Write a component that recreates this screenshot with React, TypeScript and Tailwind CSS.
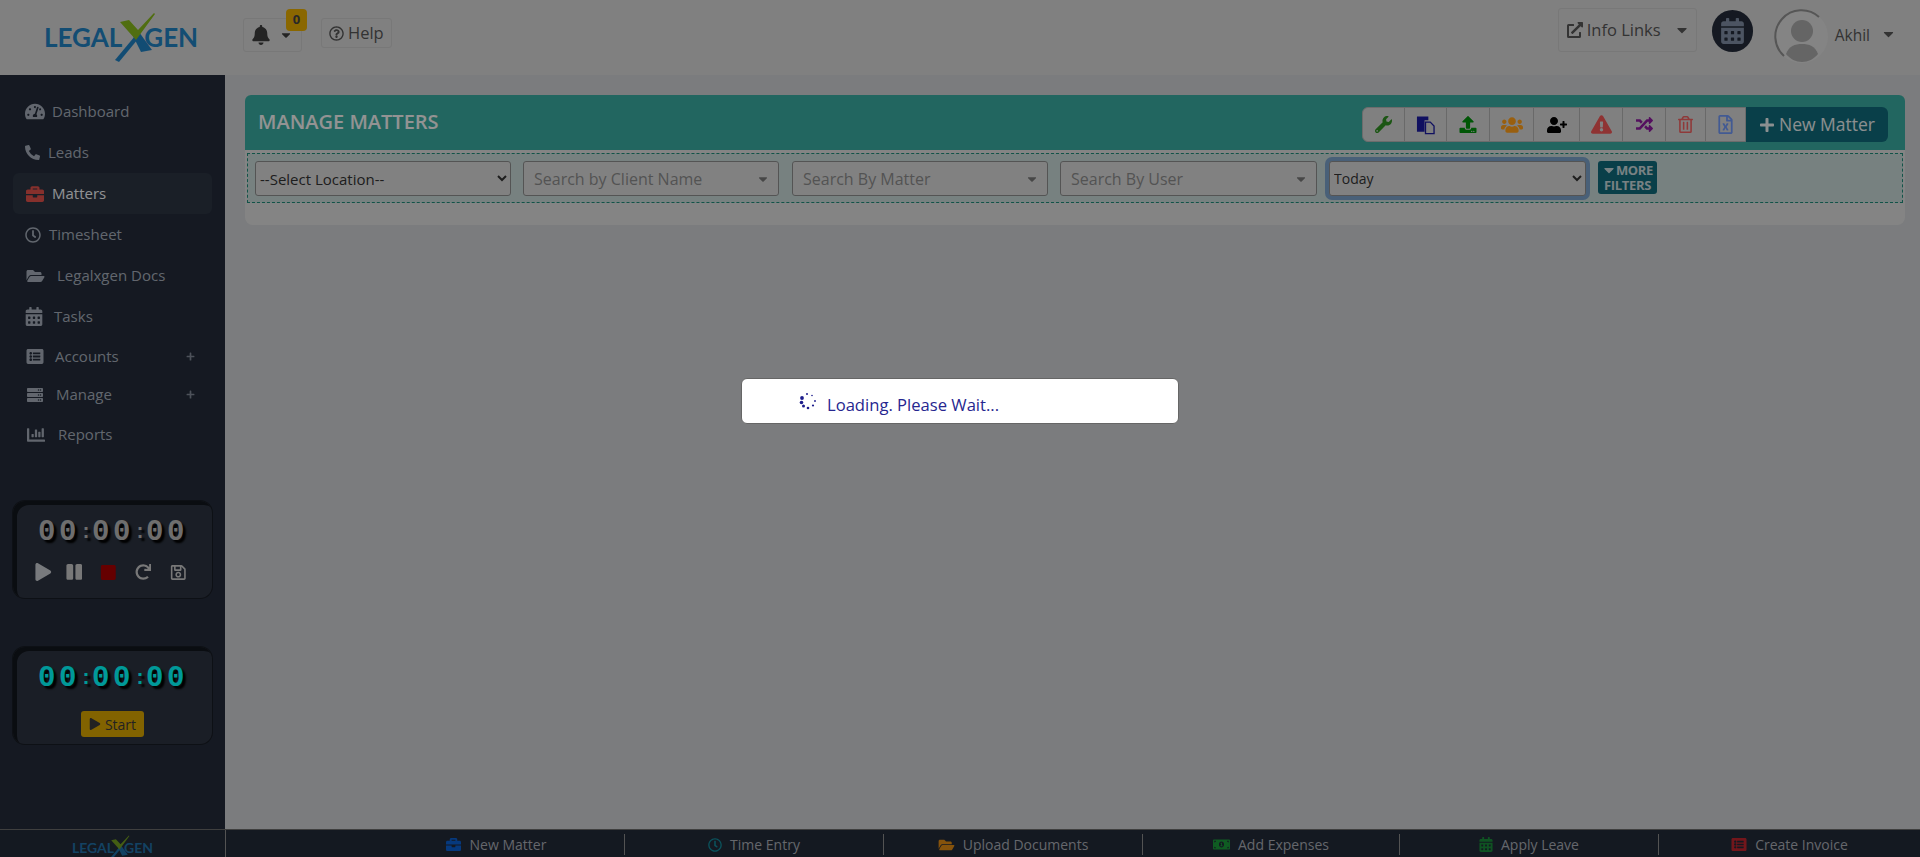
import {
  FaBell, FaBriefcase, FaCalendarAlt, FaCaretDown, FaChartBar, FaExclamationTriangle, FaExternalLinkAlt,
  FaFolderOpen, FaListAlt, FaMoneyBillAlt, FaPause, FaPhoneAlt, FaPlay, FaPlus, FaRandom, FaRedo,
  FaRegClock, FaRegFileExcel, FaRegQuestionCircle, FaRegSave, FaRegTrashAlt, FaServer, FaStop,
  FaTachometerAlt, FaUpload, FaUserPlus, FaUsers, FaWrench,
} from "react-icons/fa";

const menu = [
  { label: "Dashboard", icon: <FaTachometerAlt className="h-[19px] w-[20px]" />, gap: "ml-[7px]", row: "h-[41px]" },
  { label: "Leads", icon: <FaPhoneAlt className="h-[15px] w-[15px]" />, gap: "ml-[8px]", row: "h-[41px]" },
  { label: "Matters", icon: <FaBriefcase className="h-[18px] w-[20px] text-[#e0504a]" />, gap: "ml-[7px]", row: "h-[41px]", active: true },
  { label: "Timesheet", icon: <FaRegClock className="h-[16px] w-[16px]" />, gap: "ml-[8px]", row: "h-[41px]" },
  { label: "Legalxgen Docs", icon: <FaFolderOpen className="h-[16px] w-[21px]" />, gap: "ml-[11px]", row: "h-[41px]" },
  { label: "Tasks", icon: <FaCalendarAlt className="h-[19px] w-[18px]" />, gap: "ml-[11px]", row: "h-[41px]" },
  { label: "Accounts", icon: <FaListAlt className="h-[17px] w-[20px]" />, gap: "ml-[10px]", row: "h-[38px]", plus: true },
  { label: "Manage", icon: <FaServer className="h-[16px] w-[20px]" />, gap: "ml-[11px]", row: "h-[39px]", plus: true },
  { label: "Reports", icon: <FaChartBar className="h-[18px] w-[22px]" />, gap: "ml-[11px]", row: "h-[41px]" },
];

const tools = [
  { icon: <FaWrench className="h-[17px] w-[17px] text-[#2f8f22]" />, w: "w-[42px]" },
  { icon: <PasteIcon />, w: "w-[42px]" },
  { icon: <FaUpload className="h-[17px] w-[18px] text-[#00900a]" />, w: "w-[43px]" },
  { icon: <FaUsers className="h-[22px] w-[22px] text-[#ff9f1a]" />, w: "w-[44px]" },
  { icon: <FaUserPlus className="h-[16px] w-[20px] text-black" />, w: "w-[46px]" },
  { icon: <FaExclamationTriangle className="h-[19px] w-[21px] text-[#ee5555]" />, w: "w-[43px]" },
  { icon: <FaRandom className="h-[17px] w-[19px] text-[#8c1a9e]" />, w: "w-[43px]" },
  { icon: <FaRegTrashAlt className="h-[17px] w-[15px] text-[#ee6060]" />, w: "w-[40px]" },
  { icon: <FaRegFileExcel className="h-[19px] w-[15px] text-[#6f96f5]" />, w: "w-[39px]" },
];

const shortcuts = [
  { label: "New Matter", icon: <FaBriefcase className="h-[15px] w-[17px] text-[#0a5fd0]" /> },
  { label: "Time Entry", icon: <FaRegClock className="h-[14px] w-[14px] text-[#128a9a]" /> },
  { label: "Upload Documents", icon: <FaFolderOpen className="h-[14px] w-[17px] text-[#e08a14]" /> },
  { label: "Add Expenses", icon: <FaMoneyBillAlt className="h-[15px] w-[17px] text-[#1a9a3a]" /> },
  { label: "Apply Leave", icon: <FaCalendarAlt className="h-[15px] w-[14px] text-[#1a8a3a]" /> },
  { label: "Create Invoice", icon: <FaListAlt className="h-[15px] w-[16px] text-[#c0262e]" /> },
];

function PasteIcon() {
  return (
    <svg viewBox="0 0 20 20" className="h-[20px] w-[19px]">
      <path d="M1 1h12v4H9v12H1z" fill="#1c1ca0" />
      <path d="M10 7h5l4 4v8H10z" fill="#d4d4d4" stroke="#1c1ca0" strokeWidth="1.4" />
    </svg>
  );
}

function Logo({ small }: { small?: boolean }) {
  return (
    <div className={`flex items-center font-['Lato',sans-serif] font-bold text-[#2080c0] ${small ? "text-[14px]" : "text-[26px]"}`}>
      <span>LEGAL</span>
      <svg
        viewBox="0 0 42 50"
        className={small ? "-mx-[6px] h-[26px] w-[22px] shrink-0" : "-ml-[8px] -mr-[12px] h-[50px] w-[42px] shrink-0"}
      >
        <path d="M21 24l3 3L5 50l-4-2z" fill="#1f7fc0" />
        <path d="M19 24l6-4 13 18-11 2z" fill="#1f7fc0" />
        <path d="M6 10l9-2 9 10L40 1l1 1-19 26z" fill="#86b81c" />
      </svg>
      <span>GEN</span>
    </div>
  );
}

function Clock({ colour, children }: { colour: string; children: React.ReactNode }) {
  const groups = ["00", "00", "00"];
  return (
    <div className="flex h-[97px] flex-col rounded-xl bg-[#2c3340] px-[25px] pt-[17px] shadow-[inset_4px_4px_0_#12161d,0_0_0_1px_#171b23]">
      <div className={`flex h-[30px] items-center font-['Liberation_Mono',monospace] text-[29px] font-bold ${colour} [text-shadow:3px_3px_2px_#000]`}>
        {groups.map((g, i) => (
          <div key={i} className="flex items-center">
            {i > 0 && <span className="w-[12px] text-[20px]">:</span>}
            {g.split("").map((d, j) => (
              <span key={j} className="w-[21px]">{d}</span>
            ))}
          </div>
        ))}
      </div>
      {children}
    </div>
  );
}

function SearchBox({ label, w }: { label: string; w: string }) {
  return (
    <div className={`flex h-[35px] items-center justify-between rounded-[3px] border border-[#8d8d8d] bg-[#d8d8d8] pl-[10px] pr-[9px] text-[16px] text-[#8b8b8b] ${w}`}>
      <span>{label}</span>
      <FaCaretDown className="h-[14px] w-[12px] text-[#777]" />
    </div>
  );
}

export default function App() {
  return (
    <div className="relative flex h-screen w-full flex-col overflow-hidden bg-[#cdcfd2] font-['Open_Sans',sans-serif]">
      <header className="flex h-[75px] shrink-0 items-start bg-[#d6d6d6]">
        <div className="ml-[44px] mt-[12px] w-[199px]">
          <Logo />
        </div>
        <div className="relative mt-[18px] flex h-[34px] w-[59px] items-center gap-[10px] rounded-[3px] border border-[#c8c8c8] pl-[8px]">
          <FaBell className="h-[20px] w-[18px] text-[#3c3c3c]" />
          <FaCaretDown className="h-[14px] w-[12px] text-[#3c3c3c]" />
          <span className="absolute -right-[6px] -top-[10px] flex h-[22px] w-[21px] items-center justify-center rounded-[4px] bg-[#e6ac00] text-[13px] font-bold text-[#444]">0</span>
        </div>
        <div className="ml-[19px] mt-[18px] flex h-[30px] w-[71px] items-center gap-[4px] rounded-[3px] border border-[#c8c8c8] pl-[7px] text-[16.5px] text-[#555]">
          <FaRegQuestionCircle className="h-[15px] w-[15px]" />
          Help
        </div>
        <div className="ml-auto mt-[8px] flex h-[44px] w-[139px] items-center rounded-[3px] border border-[#c8c8c8] pl-[8px] text-[16.5px] text-[#555]">
          <FaExternalLinkAlt className="h-[16px] w-[16px]" />
          <span className="ml-[4px]">Info Links</span>
          <FaCaretDown className="ml-[14px] h-[16px] w-[14px]" />
        </div>
        <div className="ml-[15px] mt-[10px] flex h-[42px] w-[41px] items-center justify-center rounded-full bg-[#232b39]">
          <FaCalendarAlt className="h-[26px] w-[23px] text-[#7f8da3]" />
        </div>
        <svg viewBox="0 0 55 55" className="ml-[21px] mt-[9px] h-[55px] w-[55px]">
          <circle cx="27.5" cy="27.5" r="26.5" fill="#dcdcdc" />
          <circle cx="28" cy="22" r="11" fill="#a8a8a8" />
          <path d="M12 45c3-8 9-10 16-10s13 2 16 10c-4 5-10 8-16 8s-12-3-16-8z" fill="#a8a8a8" />
          <path d="M45 8A26 26 0 0 0 10 47" fill="none" stroke="#8f8f8f" strokeWidth="2" />
        </svg>
        <span className="ml-[6px] mt-[24px] text-[15.5px] text-[#555]">Akhil</span>
        <FaCaretDown className="ml-[12px] mr-[25px] mt-[26px] h-[16px] w-[13px] text-[#555]" />
      </header>

      <div className="flex min-h-0 flex-1">
        <aside className="flex w-[225px] shrink-0 flex-col bg-[#232b39] pt-[16px] text-[15px] text-[#a3abb8]">
          {menu.map((m) => (
            <div
              key={m.label}
              className={`mx-[13px] flex shrink-0 items-center rounded-md pl-[12px] pr-[17px] ${m.row} ${m.active ? "bg-[#2c3442] text-[#f0f2f5]" : ""}`}
            >
              <span className="flex w-auto items-center justify-start">{m.icon}</span>
              <span className={m.gap}>{m.label}</span>
              {m.plus && <FaPlus className="ml-auto h-[9px] w-[9px] text-[#808896]" />}
            </div>
          ))}
          <div className="mx-[13px] mt-[46px]">
            <Clock colour="text-[#b8b8b8]">
              <div className="mt-[15px] flex items-center text-[#c8c8c8]">
                <FaPlay className="-ml-[3px] h-[18px] w-[17px] text-[#c8ccd0]" />
                <FaPause className="ml-[14px] h-[18px] w-[17px]" />
                <FaStop className="ml-[18px] h-[17px] w-[17px] text-[#a80000]" />
                <FaRedo className="ml-[18px] h-[16px] w-[17px]" />
                <FaRegSave className="ml-[19px] h-[17px] w-[17px]" />
              </div>
            </Clock>
          </div>
          <div className="mx-[13px] mt-[49px]">
            <Clock colour="text-[#00ffff]">
              <div className="mt-[17px] flex h-[26px] w-[63px] items-center justify-center gap-[4px] self-center rounded-[3px] bg-[#d9a500] text-[14px] text-[#3a3a3a]">
                <FaPlay className="h-[12px] w-[12px]" />
                Start
              </div>
            </Clock>
          </div>
        </aside>

        <main className="min-w-0 flex-1 pl-[20px] pr-[15px] pt-[20px]">
          <section className="h-[130px] rounded-lg bg-[#dddddd]">
            <div className="flex h-[55px] items-start justify-between rounded-t-md bg-[#3aaaa0] pl-[13px] pr-[17px]">
              <h1 className="mt-[12px] text-[20px] font-semibold text-[#f5f5f5]">MANAGE MATTERS</h1>
              <div className="mt-[12px] flex h-[35px] items-stretch">
                <div className="flex overflow-hidden rounded-l-md border border-[#b4b4b4] bg-[#d6d6d6]">
                  {tools.map((t, i) => (
                    <div key={i} className={`flex items-center justify-center border-r border-[#b0b0b0] last:border-r-0 ${t.w}`}>
                      {t.icon}
                    </div>
                  ))}
                </div>
                <div className="flex w-[142px] items-center justify-center gap-[4px] rounded-r-md bg-[#106a7a] text-[17.5px] text-[#e8eef0]">
                  <FaPlus className="h-[16px] w-[16px]" />
                  New Matter
                </div>
              </div>
            </div>
            <div className="mx-[2px] mt-[3px] flex h-[50px] items-start border border-dashed border-[#1f8a78] bg-[#c6d8d6] pl-[7px] pt-[7px]">
              <select defaultValue="loc" className="h-[35px] w-[256px] rounded-[3px] border border-[#8d8d8d] bg-[#d8d8d8] text-[15px] text-[#333]">
                <option value="loc">--Select Location--</option>
              </select>
              <div className="ml-[12px]">
                <SearchBox label="Search by Client Name" w="w-[256px]" />
              </div>
              <div className="ml-[13px]">
                <SearchBox label="Search By Matter" w="w-[256px]" />
              </div>
              <div className="ml-[12px]">
                <SearchBox label="Search By User" w="w-[257px]" />
              </div>
              <select defaultValue="today" className="ml-[12px] h-[35px] w-[257px] rounded-[3px] border border-[#8d8d8d] bg-[#d8d8d8] text-[14px] text-[#333] shadow-[0_0_0_4px_#7aa0c8]">
                <option value="today">Today</option>
              </select>
              <div className="ml-[12px] flex h-[33px] w-[59px] flex-col items-center justify-center rounded-[3px] bg-[#106a7a] text-[13px] font-bold leading-[15px] tracking-tight text-[#c8d8da]">
                <span className="flex items-center">
                  <FaCaretDown className="h-[16px] w-[14px]" />
                  MORE
                </span>
                <span>FILTERS</span>
              </div>
            </div>
          </section>
        </main>
      </div>

      <footer className="flex h-[28px] shrink-0 items-center border-t border-[#6a6a6a] bg-[#222a38] text-[14px] text-[#a8acb4]">
        <div className="flex h-full w-[225px] items-center justify-center overflow-hidden pt-[8px] opacity-80">
          <Logo small />
        </div>
        <div className="grid h-full flex-1 grid-cols-[399px_259px_259px_257px_259px_1fr] border-l border-[#8a8a8a]">
          {shortcuts.map((s, i) => (
            <div
              key={s.label}
              className={`my-[4px] flex items-center justify-center gap-[8px] border-[#8a8a8a] ${i === 0 ? "pl-[141px]" : ""} ${i < 5 ? "border-r" : ""}`}
            >
              {s.icon}
              <span>{s.label}</span>
            </div>
          ))}
        </div>
      </footer>

      <div className="absolute inset-0 bg-black/40" />
      <div className="absolute left-[741px] top-[378px] flex h-[46px] w-[438px] items-center rounded-md border border-[#666] bg-white pl-[57px] text-[16.6px] text-[#26268f]">
        <svg viewBox="0 0 18 18" className="h-[18px] w-[18px]" fill="#1c1c8c">
          <circle cx="3" cy="6" r="1.9" />
          <circle cx="2.5" cy="10.5" r="1.8" />
          <circle cx="4.5" cy="14" r="1.5" />
          <circle cx="9" cy="16" r="1.3" />
          <circle cx="14" cy="13.5" r="1.1" />
          <circle cx="16" cy="9" r="0.9" />
          <circle cx="13" cy="3.5" r="0.8" />
          <circle cx="8" cy="2" r="1" />
        </svg>
        <span className="ml-[10px] mt-[8px]">Loading. Please Wait...</span>
      </div>
    </div>
  );
}
